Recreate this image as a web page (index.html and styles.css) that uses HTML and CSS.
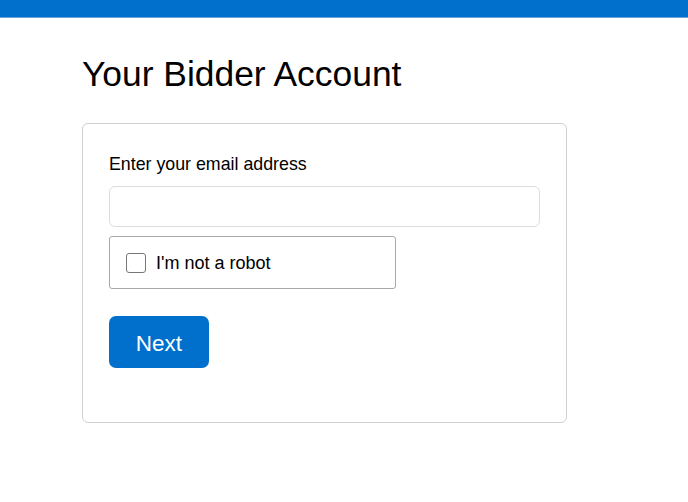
FILE: index.html
```html
<!DOCTYPE html>
<html lang="en">

<head>
    <meta charset="UTF-8">
    <meta name="viewport" content="width=device-width, initial-scale=1.0">
    <title>Your Bidder Account</title>
    <link rel="stylesheet" href="styles.css">
</head>

<body>

    <div id="top-bar"></div>

    <div id="page">
        <h1 id="title">Your Bidder Account</h1>

        <form id="login-card">
            <label id="email-label" for="email">Enter your email address</label>
            <input id="email" type="email">

            <!-- 验证框 -->
            <div id="captcha">
                <span id="captcha-box"></span>
                <span id="captcha-text">I'm not a robot</span>
            </div>

            <button id="btn-next" type="button">Next</button>
        </form>
    </div>

</body>

</html>
```

FILE: styles.css
```css
* {
    margin: 0;
    padding: 0;
    box-sizing: border-box;
}

body {
    font-family: "Liberation Sans", Arial, sans-serif;
    color: #000;
    background: #fff;
}

#top-bar {
    height: 18px;
    background: #0070cc;
    border-bottom: 1px solid #6aa6e0;
}

#page {
    padding: 36px 0 0 82px;
}

#title {
    font-size: 35.4px;
    font-weight: normal;
    line-height: 40px;
    margin-bottom: 29px;
}

#login-card {
    width: 485px;
    height: 300px;
    border: 1px solid #d0d0d0;
    border-radius: 6px;
    padding: 28px 26px 0 26px;
    display: flex;
    flex-direction: column;
    align-items: flex-start;
}

#email-label {
    font-size: 17.8px;
    line-height: 24px;
    margin-bottom: 10px;
}

#email {
    width: 100%;
    height: 41px;
    border: 1px solid #dcdcdc;
    border-radius: 6px;
    margin-bottom: 9px;
    outline: none;
}

#captcha {
    width: 287px;
    height: 53px;
    border: 1px solid #a8a8a8;
    border-radius: 3px;
    display: flex;
    align-items: center;
    padding: 2px 0 0 16px;
    margin-bottom: 27px;
}

#captcha-box {
    width: 20px;
    height: 20px;
    border: 1.5px solid #777;
    border-radius: 3px;
    margin: -2px 10px 0 0;
}

#captcha-text {
    font-size: 18px;
}

#btn-next {
    width: 100px;
    height: 52px;
    border: 0;
    border-radius: 7px;
    background: #0070cc;
    color: #fff;
    font-family: "Liberation Sans", Arial, sans-serif;
    font-size: 22.5px;
    padding-top: 3px;
    cursor: pointer;
}
```
